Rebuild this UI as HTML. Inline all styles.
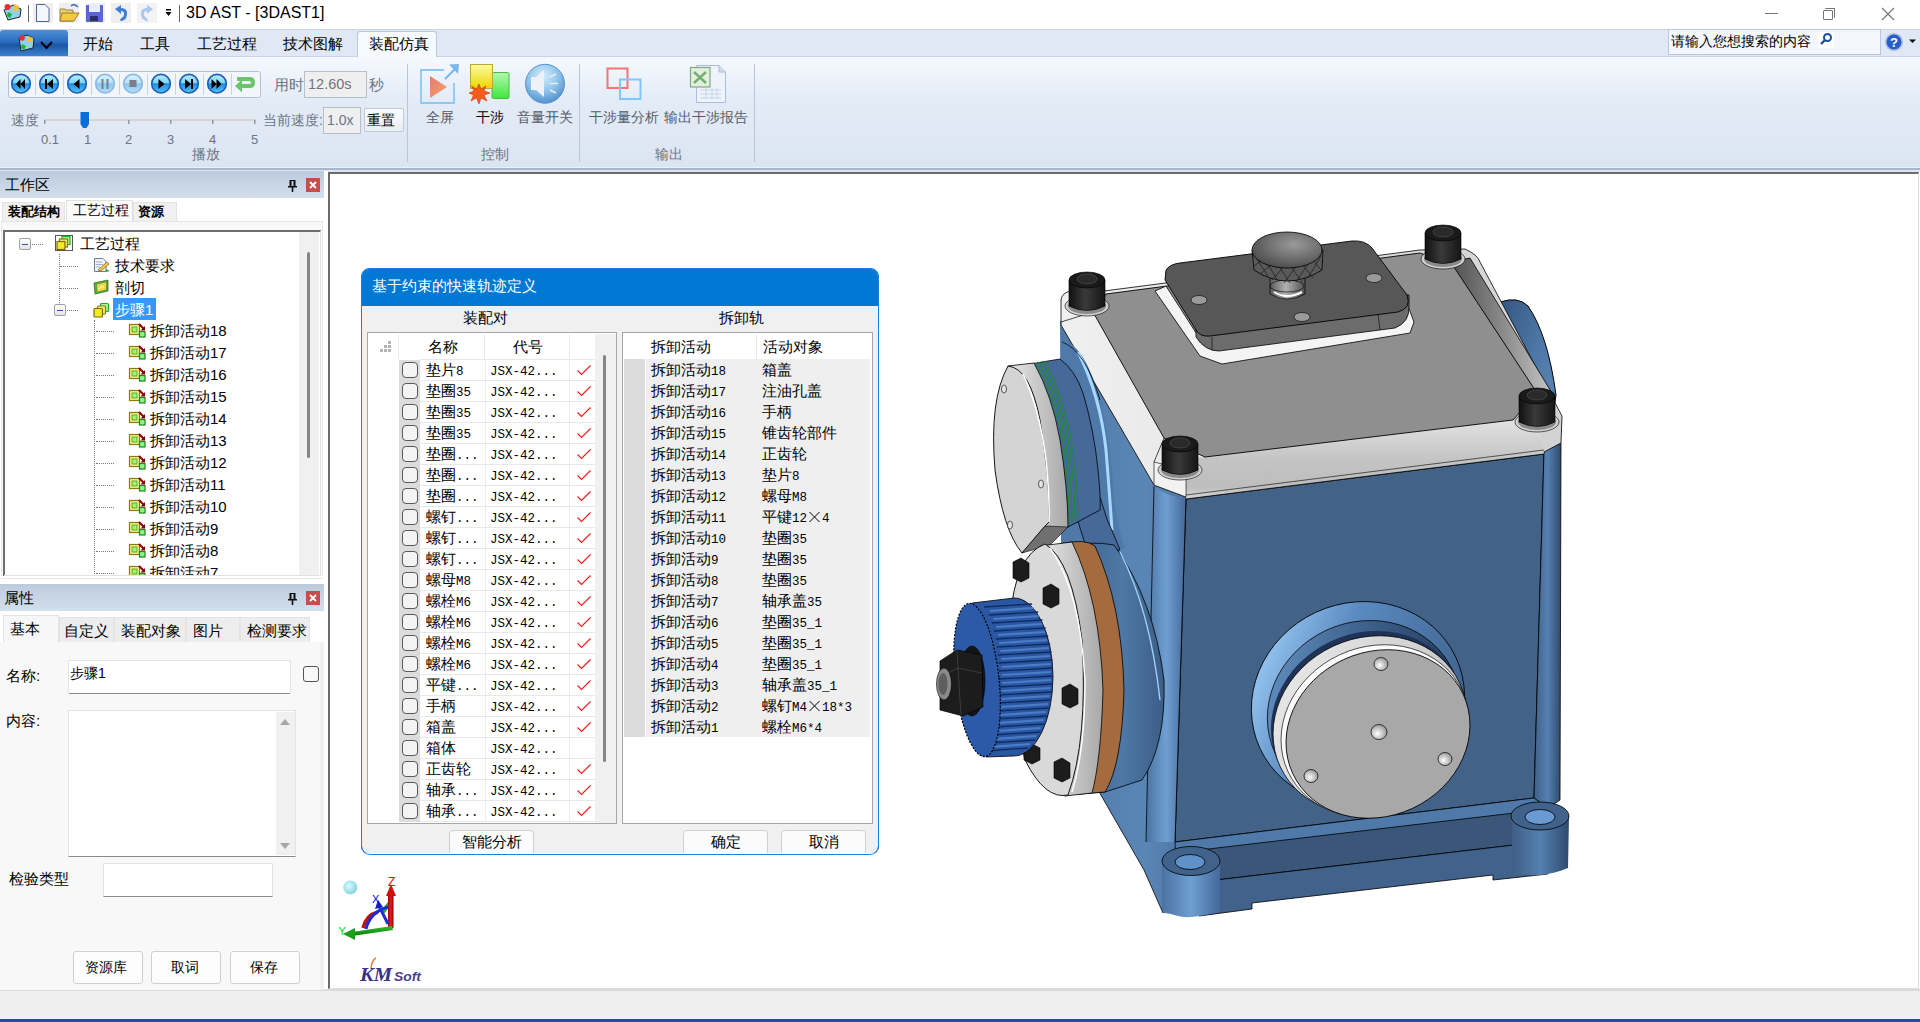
<!DOCTYPE html>
<html><head><meta charset="utf-8">
<style>
*{box-sizing:border-box;margin:0;padding:0}
html,body{width:1920px;height:1022px;overflow:hidden;background:#fff;font-family:"Liberation Sans",sans-serif;font-size:15px;color:#000}
.a{position:absolute}
.t{position:absolute;white-space:nowrap;line-height:1}
</style></head><body>
<!-- title bar -->
<div class="a" style="left:0;top:0;width:1920px;height:29px;background:#fff"></div>
<div class="t" style="left:186px;top:5px;font-size:16px;color:#000">3D AST - [3DAST1]</div>
<!-- tab row -->
<div class="a" style="left:0;top:29px;width:1920px;height:28px;background:#dfe8f4;border-top:1px solid #c9d6e6"></div>
<div class="a" style="left:0;top:30px;width:68px;height:27px;border-radius:3px 3px 0 0;background:linear-gradient(#4f8fd6,#2a6bbf 45%,#1b56a6 55%,#3f86d2)"></div>
<div class="t" style="left:83px;top:36px">开始</div>
<div class="t" style="left:140px;top:36px">工具</div>
<div class="t" style="left:197px;top:36px">工艺过程</div>
<div class="t" style="left:283px;top:36px">技术图解</div>
<div class="a" style="left:357px;top:31px;width:80px;height:27px;background:#f6f9fd;border:1px solid #b9c9dc;border-bottom:none;border-radius:3px 3px 0 0"></div>
<div class="t" style="left:369px;top:36px">装配仿真</div>
<!-- ribbon body -->
<div class="a" style="left:0;top:57px;width:1920px;height:111px;background:linear-gradient(#f5f9fe,#e3ebf6 40%,#dbe5f2)"></div>
<div class="a" style="left:357px;top:56px;width:0;height:0"></div><div class="a" style="left:0;top:56px;width:357px;height:1px;background:#c6d4e6"></div><div class="a" style="left:437px;top:56px;width:1483px;height:1px;background:#c6d4e6"></div>
<div class="a" style="left:0;top:167px;width:1920px;height:1px;background:#e9f0f8"></div>
<div class="a" style="left:0;top:168px;width:1920px;height:2px;background:#a7b8cc"></div>
<div class="a" style="left:0;top:170px;width:1920px;height:2px;background:#dfe6ef"></div>
<!-- left panel bg -->
<div class="a" style="left:0;top:171px;width:328px;height:819px;background:#fff"></div>
<!-- viewport -->
<div class="a" style="left:328px;top:172px;width:1591px;height:817px;background:#fff;border-left:2px solid #6a6a6a;border-top:2px solid #6a6a6a;border-right:1px solid #dcdcdc;border-bottom:1px solid #dcdcdc"></div>
<!-- status bar -->
<div class="a" style="left:0;top:989px;width:1920px;height:31px;background:#efefef;border-top:2px solid #dadada"></div>
<div class="a" style="left:0;top:1019px;width:1920px;height:3px;background:#1f4f9a"></div>


<!-- LEFT PANEL -->
<div class="a" style="left:0;top:171px;width:324px;height:27px;background:linear-gradient(#bccbdc,#d3dfed)"></div>
<div class="t" style="left:5px;top:177px;color:#000">工作区</div>
<svg class="a" style="left:285px;top:178px" width="38" height="16"><path d="M4.5 2 H10.5 V8 H12 V9.5 H8.3 V14 H6.7 V9.5 H3 V8 H4.5 Z" fill="#111"/><rect x="6.5" y="3" width="2" height="5" fill="#bccbdc"/><rect x="21" y="0" width="14" height="14" fill="#c84c4c"/><path d="M25 4 L31 10 M31 4 L25 10" stroke="#fff" stroke-width="1.8"/></svg>
<div class="a" style="left:0;top:198px;width:324px;height:380px;background:#fff"></div>
<div class="a" style="left:2px;top:202px;width:63px;height:19px;background:#f0f0f0;border:1px solid #e3e3e3;border-bottom:none"></div>
<div class="a" style="left:66px;top:200px;width:67px;height:21px;background:#fafafa;border:1px solid #e0e0e0;border-bottom:none"></div>
<div class="a" style="left:133px;top:202px;width:44px;height:19px;background:#f0f0f0;border:1px solid #e3e3e3;border-bottom:none"></div>
<div class="t" style="left:8px;top:205px;font-size:13px;font-weight:bold">装配结构</div>
<div class="t" style="left:73px;top:203px;font-size:14px">工艺过程</div>
<div class="t" style="left:138px;top:205px;font-size:13px;font-weight:bold">资源</div>
<div class="a" style="left:1px;top:221px;width:322px;height:357px;background:#f8f8f8;border:1px solid #e6e6e6"></div>
<div class="a" style="left:3px;top:230px;width:318px;height:347px;background:#fff;border-top:2px solid #6e6e6e;border-left:2px solid #6e6e6e;border-right:1px solid #e2e2e2;border-bottom:1px solid #e2e2e2"></div>
<div class="a" style="left:299px;top:232px;width:20px;height:344px;background:#f0f0f0"></div>
<div class="a" style="left:307px;top:252px;width:3px;height:206px;background:#858585;border-radius:2px"></div>
<!-- tree -->
<div class="a" style="left:19px;top:238px;width:12px;height:12px;background:linear-gradient(#fff,#e4e4e4);border:1px solid #a0a0a0;border-radius:2px"></div>
<div class="a" style="left:22px;top:243.5px;width:6px;height:1.5px;background:#3a4fa0"></div>
<div class="a" style="left:32px;top:244px;width:11px;height:1px;border-top:1px dotted #777"></div>
<svg class="a" style="left:55px;top:235px" width="18" height="16"><rect x="0.5" y="0.5" width="17" height="15" fill="#fff" stroke="#555" stroke-width="1"/><rect x="7" y="1.5" width="8" height="8" fill="#b0f090" stroke="#20b020" stroke-width="1.2"/><rect x="4.5" y="4" width="8" height="8" fill="#f2ee80" stroke="#8a7a10" stroke-width="1.2"/><rect x="2" y="6.5" width="8" height="8" fill="#f4ea20" stroke="#7a6a10" stroke-width="1.2"/></svg>
<div class="t" style="left:80px;top:236px">工艺过程</div>
<div class="a" style="left:59px;top:254px;width:1px;height:51px;border-left:1px dotted #777"></div>
<div class="a" style="left:60px;top:266px;width:18px;height:1px;border-top:1px dotted #777"></div>
<div class="a" style="left:60px;top:288px;width:18px;height:1px;border-top:1px dotted #777"></div>
<svg class="a" style="left:93px;top:257px" width="18" height="16"><path d="M1.5 1.5 H10 L13 4.5 V14.5 H1.5 Z" fill="#eef2fa" stroke="#6a7a9a" stroke-width="1"/><path d="M3 5 H9 M3 7.5 H10 M3 10 H7" stroke="#8a9ab8" stroke-width="0.8"/><path d="M5 13 L14 5 L16 7 L8 14 Z" fill="#f2c84a" stroke="#806010" stroke-width="0.7"/><path d="M13 12 L17 14 L13 15Z" fill="#30a030"/></svg>
<div class="t" style="left:115px;top:258px">技术要求</div>
<svg class="a" style="left:93px;top:279px" width="18" height="17"><path d="M1 4 L15 1 V12 L2 15 Z" fill="#5ea83a" stroke="#3a7020" stroke-width="0.8"/><path d="M4 5.5 L13 3.5 V10.5 L4.5 12.5 Z" fill="#f4d84a"/><path d="M6 10 Q8 6 11 8" fill="none" stroke="#fff" stroke-width="1"/></svg>
<div class="t" style="left:115px;top:280px">剖切</div>
<div class="a" style="left:54px;top:304px;width:12px;height:12px;background:linear-gradient(#fff,#e4e4e4);border:1px solid #a0a0a0;border-radius:2px"></div>
<div class="a" style="left:57px;top:309.5px;width:6px;height:1.5px;background:#3a4fa0"></div>
<div class="a" style="left:67px;top:310px;width:11px;height:1px;border-top:1px dotted #777"></div>
<svg class="a" style="left:92px;top:302px" width="18" height="16"><rect x="8.5" y="1.5" width="8" height="8" rx="1" fill="#b0f090" stroke="#20b020" stroke-width="1.2"/><rect x="5.5" y="4" width="8" height="8" rx="1" fill="#f2ee80" stroke="#8a7a10" stroke-width="1.2"/><rect x="2" y="6.5" width="8.5" height="8.5" rx="1" fill="#f4ea20" stroke="#7a6a10" stroke-width="1.2"/></svg>
<div class="a" style="left:113px;top:298px;width:43px;height:22px;background:#3399ff"></div>
<div class="t" style="left:115px;top:302px;color:#fff">步骤1</div>
<div class="a" style="left:94px;top:320px;width:1px;height:256px;border-left:1px dotted #777"></div>
<svg class="a" style="left:128px;top:323px" width="18" height="16"><rect x="1.5" y="1.5" width="10" height="10" fill="#f4f08a" stroke="#8a7a10" stroke-width="1.2"/><rect x="4" y="4" width="5" height="5" fill="#a8ee70" stroke="#40a020" stroke-width="0.8"/><rect x="11.5" y="8.5" width="5.5" height="5.5" fill="#8ef08e" stroke="#1a8a1a" stroke-width="1.2"/><path d="M11 1 L16 6" stroke="#8a0010" stroke-width="2"/><path d="M17 3 V7.5 H12.5 Z" fill="#8a0010"/></svg><div class="a" style="left:96px;top:331px;width:18px;height:1px;border-top:1px dotted #777"></div><div class="t" style="left:150px;top:323px">拆卸活动18</div><svg class="a" style="left:128px;top:345px" width="18" height="16"><rect x="1.5" y="1.5" width="10" height="10" fill="#f4f08a" stroke="#8a7a10" stroke-width="1.2"/><rect x="4" y="4" width="5" height="5" fill="#a8ee70" stroke="#40a020" stroke-width="0.8"/><rect x="11.5" y="8.5" width="5.5" height="5.5" fill="#8ef08e" stroke="#1a8a1a" stroke-width="1.2"/><path d="M11 1 L16 6" stroke="#8a0010" stroke-width="2"/><path d="M17 3 V7.5 H12.5 Z" fill="#8a0010"/></svg><div class="a" style="left:96px;top:353px;width:18px;height:1px;border-top:1px dotted #777"></div><div class="t" style="left:150px;top:345px">拆卸活动17</div><svg class="a" style="left:128px;top:367px" width="18" height="16"><rect x="1.5" y="1.5" width="10" height="10" fill="#f4f08a" stroke="#8a7a10" stroke-width="1.2"/><rect x="4" y="4" width="5" height="5" fill="#a8ee70" stroke="#40a020" stroke-width="0.8"/><rect x="11.5" y="8.5" width="5.5" height="5.5" fill="#8ef08e" stroke="#1a8a1a" stroke-width="1.2"/><path d="M11 1 L16 6" stroke="#8a0010" stroke-width="2"/><path d="M17 3 V7.5 H12.5 Z" fill="#8a0010"/></svg><div class="a" style="left:96px;top:375px;width:18px;height:1px;border-top:1px dotted #777"></div><div class="t" style="left:150px;top:367px">拆卸活动16</div><svg class="a" style="left:128px;top:389px" width="18" height="16"><rect x="1.5" y="1.5" width="10" height="10" fill="#f4f08a" stroke="#8a7a10" stroke-width="1.2"/><rect x="4" y="4" width="5" height="5" fill="#a8ee70" stroke="#40a020" stroke-width="0.8"/><rect x="11.5" y="8.5" width="5.5" height="5.5" fill="#8ef08e" stroke="#1a8a1a" stroke-width="1.2"/><path d="M11 1 L16 6" stroke="#8a0010" stroke-width="2"/><path d="M17 3 V7.5 H12.5 Z" fill="#8a0010"/></svg><div class="a" style="left:96px;top:397px;width:18px;height:1px;border-top:1px dotted #777"></div><div class="t" style="left:150px;top:389px">拆卸活动15</div><svg class="a" style="left:128px;top:411px" width="18" height="16"><rect x="1.5" y="1.5" width="10" height="10" fill="#f4f08a" stroke="#8a7a10" stroke-width="1.2"/><rect x="4" y="4" width="5" height="5" fill="#a8ee70" stroke="#40a020" stroke-width="0.8"/><rect x="11.5" y="8.5" width="5.5" height="5.5" fill="#8ef08e" stroke="#1a8a1a" stroke-width="1.2"/><path d="M11 1 L16 6" stroke="#8a0010" stroke-width="2"/><path d="M17 3 V7.5 H12.5 Z" fill="#8a0010"/></svg><div class="a" style="left:96px;top:419px;width:18px;height:1px;border-top:1px dotted #777"></div><div class="t" style="left:150px;top:411px">拆卸活动14</div><svg class="a" style="left:128px;top:433px" width="18" height="16"><rect x="1.5" y="1.5" width="10" height="10" fill="#f4f08a" stroke="#8a7a10" stroke-width="1.2"/><rect x="4" y="4" width="5" height="5" fill="#a8ee70" stroke="#40a020" stroke-width="0.8"/><rect x="11.5" y="8.5" width="5.5" height="5.5" fill="#8ef08e" stroke="#1a8a1a" stroke-width="1.2"/><path d="M11 1 L16 6" stroke="#8a0010" stroke-width="2"/><path d="M17 3 V7.5 H12.5 Z" fill="#8a0010"/></svg><div class="a" style="left:96px;top:441px;width:18px;height:1px;border-top:1px dotted #777"></div><div class="t" style="left:150px;top:433px">拆卸活动13</div><svg class="a" style="left:128px;top:455px" width="18" height="16"><rect x="1.5" y="1.5" width="10" height="10" fill="#f4f08a" stroke="#8a7a10" stroke-width="1.2"/><rect x="4" y="4" width="5" height="5" fill="#a8ee70" stroke="#40a020" stroke-width="0.8"/><rect x="11.5" y="8.5" width="5.5" height="5.5" fill="#8ef08e" stroke="#1a8a1a" stroke-width="1.2"/><path d="M11 1 L16 6" stroke="#8a0010" stroke-width="2"/><path d="M17 3 V7.5 H12.5 Z" fill="#8a0010"/></svg><div class="a" style="left:96px;top:463px;width:18px;height:1px;border-top:1px dotted #777"></div><div class="t" style="left:150px;top:455px">拆卸活动12</div><svg class="a" style="left:128px;top:477px" width="18" height="16"><rect x="1.5" y="1.5" width="10" height="10" fill="#f4f08a" stroke="#8a7a10" stroke-width="1.2"/><rect x="4" y="4" width="5" height="5" fill="#a8ee70" stroke="#40a020" stroke-width="0.8"/><rect x="11.5" y="8.5" width="5.5" height="5.5" fill="#8ef08e" stroke="#1a8a1a" stroke-width="1.2"/><path d="M11 1 L16 6" stroke="#8a0010" stroke-width="2"/><path d="M17 3 V7.5 H12.5 Z" fill="#8a0010"/></svg><div class="a" style="left:96px;top:485px;width:18px;height:1px;border-top:1px dotted #777"></div><div class="t" style="left:150px;top:477px">拆卸活动11</div><svg class="a" style="left:128px;top:499px" width="18" height="16"><rect x="1.5" y="1.5" width="10" height="10" fill="#f4f08a" stroke="#8a7a10" stroke-width="1.2"/><rect x="4" y="4" width="5" height="5" fill="#a8ee70" stroke="#40a020" stroke-width="0.8"/><rect x="11.5" y="8.5" width="5.5" height="5.5" fill="#8ef08e" stroke="#1a8a1a" stroke-width="1.2"/><path d="M11 1 L16 6" stroke="#8a0010" stroke-width="2"/><path d="M17 3 V7.5 H12.5 Z" fill="#8a0010"/></svg><div class="a" style="left:96px;top:507px;width:18px;height:1px;border-top:1px dotted #777"></div><div class="t" style="left:150px;top:499px">拆卸活动10</div><svg class="a" style="left:128px;top:521px" width="18" height="16"><rect x="1.5" y="1.5" width="10" height="10" fill="#f4f08a" stroke="#8a7a10" stroke-width="1.2"/><rect x="4" y="4" width="5" height="5" fill="#a8ee70" stroke="#40a020" stroke-width="0.8"/><rect x="11.5" y="8.5" width="5.5" height="5.5" fill="#8ef08e" stroke="#1a8a1a" stroke-width="1.2"/><path d="M11 1 L16 6" stroke="#8a0010" stroke-width="2"/><path d="M17 3 V7.5 H12.5 Z" fill="#8a0010"/></svg><div class="a" style="left:96px;top:529px;width:18px;height:1px;border-top:1px dotted #777"></div><div class="t" style="left:150px;top:521px">拆卸活动9</div><svg class="a" style="left:128px;top:543px" width="18" height="16"><rect x="1.5" y="1.5" width="10" height="10" fill="#f4f08a" stroke="#8a7a10" stroke-width="1.2"/><rect x="4" y="4" width="5" height="5" fill="#a8ee70" stroke="#40a020" stroke-width="0.8"/><rect x="11.5" y="8.5" width="5.5" height="5.5" fill="#8ef08e" stroke="#1a8a1a" stroke-width="1.2"/><path d="M11 1 L16 6" stroke="#8a0010" stroke-width="2"/><path d="M17 3 V7.5 H12.5 Z" fill="#8a0010"/></svg><div class="a" style="left:96px;top:551px;width:18px;height:1px;border-top:1px dotted #777"></div><div class="t" style="left:150px;top:543px">拆卸活动8</div><svg class="a" style="left:128px;top:565px" width="18" height="16"><rect x="1.5" y="1.5" width="10" height="10" fill="#f4f08a" stroke="#8a7a10" stroke-width="1.2"/><rect x="4" y="4" width="5" height="5" fill="#a8ee70" stroke="#40a020" stroke-width="0.8"/><rect x="11.5" y="8.5" width="5.5" height="5.5" fill="#8ef08e" stroke="#1a8a1a" stroke-width="1.2"/><path d="M11 1 L16 6" stroke="#8a0010" stroke-width="2"/><path d="M17 3 V7.5 H12.5 Z" fill="#8a0010"/></svg><div class="a" style="left:96px;top:573px;width:18px;height:1px;border-top:1px dotted #777"></div><div class="t" style="left:150px;top:565px">拆卸活动7</div>
<div class="a" style="left:0;top:576px;width:324px;height:8px;background:#fff"></div><div class="a" style="left:4px;top:575px;width:317px;height:1px;background:#e2e2e2"></div><div class="a" style="left:1px;top:578px;width:322px;height:1px;background:#e8e8e8"></div>
<!-- PROPERTIES -->
<div class="a" style="left:0;top:584px;width:324px;height:27px;background:linear-gradient(#bccbdc,#d3dfed)"></div>
<div class="t" style="left:4px;top:590px">属性</div>
<svg class="a" style="left:285px;top:591px" width="38" height="16"><path d="M4.5 2 H10.5 V8 H12 V9.5 H8.3 V14 H6.7 V9.5 H3 V8 H4.5 Z" fill="#111"/><rect x="6.5" y="3" width="2" height="5" fill="#bccbdc"/><rect x="21" y="0" width="14" height="14" fill="#c84c4c"/><path d="M25 4 L31 10 M31 4 L25 10" stroke="#fff" stroke-width="1.8"/></svg>
<div class="a" style="left:0;top:611px;width:324px;height:379px;background:#fff"></div><div class="a" style="left:320px;top:642px;width:4px;height:348px;background:#f0f0f0"></div>
<div class="a" style="left:0;top:642px;width:320px;height:348px;background:#f8f8f8"></div>
<div class="a" style="left:3px;top:615px;width:56px;height:28px;background:#f7f7f7;border:1px solid #e3e3e3;border-bottom:none"></div>
<div class="a" style="left:59px;top:617px;width:55px;height:25px;background:#ededed;border:1px solid #e3e3e3;border-bottom:none"></div>
<div class="a" style="left:114px;top:617px;width:72px;height:25px;background:#ededed;border:1px solid #e3e3e3;border-bottom:none"></div>
<div class="a" style="left:186px;top:617px;width:54px;height:25px;background:#ededed;border:1px solid #e3e3e3;border-bottom:none"></div>
<div class="a" style="left:240px;top:617px;width:70px;height:25px;background:#ededed;border:1px solid #e3e3e3;border-bottom:none"></div>
<div class="t" style="left:10px;top:621px">基本</div>
<div class="t" style="left:64px;top:623px">自定义</div>
<div class="t" style="left:121px;top:623px">装配对象</div>
<div class="t" style="left:193px;top:623px">图片</div>
<div class="t" style="left:247px;top:623px">检测要求</div>
<div class="t" style="left:6px;top:668px">名称:</div>
<div class="a" style="left:68px;top:660px;width:223px;height:34px;background:#fff;border:1px solid #e3e3e3;border-bottom:1px solid #8a8a8a;border-radius:2px"></div>
<div class="t" style="left:70px;top:666px;font-size:14px">步骤1</div>
<div class="a" style="left:303px;top:666px;width:16px;height:16px;background:#f8f8f8;border:1px solid #555;border-radius:3px"></div>
<div class="t" style="left:6px;top:713px">内容:</div>
<div class="a" style="left:68px;top:710px;width:228px;height:147px;background:#fff;border:1px solid #e3e3e3;border-bottom:1px solid #8a8a8a"></div>
<div class="a" style="left:276px;top:712px;width:19px;height:143px;background:#f0f0f0"></div>
<svg class="a" style="left:278px;top:715px" width="14" height="138"><path d="M2 10 L7 4 L12 10Z" fill="#a8a8a8"/><path d="M2 128 L7 134 L12 128Z" fill="#a8a8a8"/></svg>
<div class="t" style="left:9px;top:871px">检验类型</div>
<div class="a" style="left:103px;top:863px;width:170px;height:34px;background:#fff;border:1px solid #e3e3e3;border-bottom:1px solid #8a8a8a"></div>
<div class="a" style="left:73px;top:951px;width:70px;height:33px;background:#fdfdfd;border:1px solid #cfcfcf;border-radius:3px"></div>
<div class="a" style="left:151px;top:951px;width:70px;height:33px;background:#fdfdfd;border:1px solid #cfcfcf;border-radius:3px"></div>
<div class="a" style="left:230px;top:951px;width:70px;height:33px;background:#fdfdfd;border:1px solid #cfcfcf;border-radius:3px"></div>
<div class="t" style="left:85px;top:960px;font-size:14px">资源库</div>
<div class="t" style="left:171px;top:960px;font-size:14px">取词</div>
<div class="t" style="left:250px;top:960px;font-size:14px">保存</div>


<!-- TRIAD -->
<svg class="a" style="left:335px;top:868px" width="90" height="120" viewBox="335 868 90 120">
<defs><radialGradient id="tsph" cx="0.4" cy="0.4" r="0.6"><stop offset="0" stop-color="#d8fbfd"/><stop offset="1" stop-color="#86d6e0"/></radialGradient>
<linearGradient id="tred" x1="0" y1="0" x2="1" y2="0"><stop offset="0" stop-color="#a00000"/><stop offset="0.5" stop-color="#e02020"/><stop offset="1" stop-color="#900000"/></linearGradient>
<linearGradient id="tgrn" x1="0" y1="0" x2="0" y2="1"><stop offset="0" stop-color="#30c030"/><stop offset="1" stop-color="#0a7a0a"/></linearGradient></defs>
<circle cx="350.3" cy="887.4" r="7" fill="url(#tsph)"/>
<path d="M363 928 Q366 915 378 912" fill="none" stroke="#c01010" stroke-width="3.5"/>
<path d="M383 912 Q388 905 390 903" fill="none" stroke="#20b020" stroke-width="4"/>
<rect x="388" y="893" width="5.5" height="35" fill="url(#tred)"/>
<path d="M386 896 L391 884 L396 896 Z" fill="#d01010"/>
<path d="M392 926 L352 932 L352 936 L393 930 Z" fill="url(#tgrn)"/>
<path d="M343 934 L355 928 L355 940 Z" fill="#18a018"/>
<path d="M366 929 Q370 912 388 907" fill="none" stroke="#1a2ad8" stroke-width="3"/>
<path d="M388 924 L379 906" stroke="#2030d0" stroke-width="3"/>
<path d="M375 909 L378 900 L383 907 Z" fill="#1020c0"/>
<text x="388" y="886" font-size="12" fill="#f00" font-family="Liberation Sans">Z</text>
<text x="372" y="903" font-size="11" fill="#00f" font-family="Liberation Sans">X</text>
<text x="338.5" y="935" font-size="11" fill="#0d0" font-family="Liberation Sans">Y</text>
<path d="M371 968 Q372 960 376 958" fill="none" stroke="#e08040" stroke-width="1.5"/>
<text x="360" y="981" font-size="19" font-weight="bold" font-style="italic" fill="#3b2f85" font-family="Liberation Serif" textLength="32" lengthAdjust="spacingAndGlyphs">KM</text>
<text x="394" y="981" font-size="12" font-weight="bold" font-style="italic" fill="#4a3f95" font-family="Liberation Sans" textLength="27" lengthAdjust="spacingAndGlyphs">Soft</text>
</svg>
<!-- MODEL --><svg class="a" style="left:900px;top:200px" width="700" height="740" viewBox="900 200 700 740">
<defs>
<linearGradient id="mside" x1="0" y1="0" x2="1" y2="0"><stop offset="0" stop-color="#4f79a8"/><stop offset="0.6" stop-color="#5a86b6"/><stop offset="1" stop-color="#4a729f"/></linearGradient>
<linearGradient id="mfil" x1="0" y1="0" x2="1" y2="0"><stop offset="0" stop-color="#4a72a0"/><stop offset="0.5" stop-color="#6f9fd2"/><stop offset="1" stop-color="#45699a"/></linearGradient>
<linearGradient id="mrfil" x1="0" y1="0" x2="1" y2="0"><stop offset="0" stop-color="#3f5f86"/><stop offset="0.5" stop-color="#5480b0"/><stop offset="1" stop-color="#2e4a6e"/></linearGradient>
<linearGradient id="mrboss" x1="0" y1="0" x2="1" y2="1"><stop offset="0" stop-color="#2f4f78"/><stop offset="0.5" stop-color="#4d77a6"/><stop offset="1" stop-color="#5f8dc0"/></linearGradient>
<linearGradient id="mrim" x1="0" y1="0" x2="1" y2="0"><stop offset="0" stop-color="#f0f0f0"/><stop offset="1" stop-color="#d2d2d2"/></linearGradient>
<linearGradient id="mrbev" x1="0" y1="0" x2="1" y2="0"><stop offset="0" stop-color="#505050"/><stop offset="0.5" stop-color="#8a8a8a"/><stop offset="1" stop-color="#c8c8c8"/></linearGradient>
<linearGradient id="mfront" x1="0" y1="0" x2="0" y2="1"><stop offset="0" stop-color="#e2e2e2"/><stop offset="0.5" stop-color="#c4c4c4"/><stop offset="0.85" stop-color="#bdbdbd"/><stop offset="1" stop-color="#d8d8d8"/></linearGradient>
<radialGradient id="mknob" cx="0.6" cy="0.35" r="0.7"><stop offset="0" stop-color="#9a9a9a"/><stop offset="1" stop-color="#4a4a4a"/></radialGradient>
<linearGradient id="mbolt" x1="0" y1="0" x2="1" y2="0"><stop offset="0" stop-color="#111"/><stop offset="0.45" stop-color="#3a3a3a"/><stop offset="1" stop-color="#151515"/></linearGradient>
<linearGradient id="mdisc" x1="0" y1="0" x2="1" y2="1"><stop offset="0" stop-color="#d8d8d8"/><stop offset="1" stop-color="#bdbdbd"/></linearGradient>
<linearGradient id="mband" x1="0" y1="0" x2="1" y2="0"><stop offset="0" stop-color="#e8e8e8"/><stop offset="1" stop-color="#a8a8a8"/></linearGradient>
<linearGradient id="mgear" x1="0" y1="0" x2="1" y2="0"><stop offset="0" stop-color="#1f3f7c"/><stop offset="0.5" stop-color="#3566b4"/><stop offset="1" stop-color="#244a8c"/></linearGradient>
<linearGradient id="mhous" x1="0" y1="0" x2="1" y2="0"><stop offset="0" stop-color="#3d5f88"/><stop offset="0.6" stop-color="#4e78a6"/><stop offset="1" stop-color="#3c5d86"/></linearGradient>
<linearGradient id="mcap" x1="0" y1="0" x2="1" y2="1"><stop offset="0" stop-color="#b4b4b4"/><stop offset="1" stop-color="#a2a2a2"/></linearGradient>
<linearGradient id="mrecess" x1="0" y1="0.2" x2="0.8" y2="1"><stop offset="0" stop-color="#9ccbf5"/><stop offset="0.35" stop-color="#5a8ac0"/><stop offset="1" stop-color="#3a5c86"/></linearGradient>
<linearGradient id="mrec2" x1="0" y1="0" x2="1" y2="0.6"><stop offset="0" stop-color="#6b9bd0"/><stop offset="0.5" stop-color="#40658f"/><stop offset="1" stop-color="#22385a"/></linearGradient>
<linearGradient id="mcband" x1="0" y1="0" x2="1" y2="1"><stop offset="0" stop-color="#ececec"/><stop offset="0.6" stop-color="#cfcfcf"/><stop offset="1" stop-color="#9a9a9a"/></linearGradient>
<radialGradient id="mhole" cx="0.4" cy="0.6" r="0.6"><stop offset="0" stop-color="#ffffff"/><stop offset="1" stop-color="#9a9a9a"/></radialGradient>
<linearGradient id="mstem" x1="0" y1="0" x2="1" y2="0"><stop offset="0" stop-color="#5a5a5a"/><stop offset="0.45" stop-color="#b0b0b0"/><stop offset="1" stop-color="#505050"/></linearGradient>
</defs>
<g stroke="#000" stroke-width="1" stroke-linejoin="round">
<!-- right boss behind -->
<path d="M1488 306 L1500 302 Q1518 296 1528 306 Q1548 335 1556 395 L1545 470 L1488 470 Z" fill="url(#mrboss)"/>
<!-- left side face of box -->
<path d="M1060 320 L1154 484 L1186 497 L1176 860 L1199 916 L1163 913 L1144 870 L1098 790 L1062 760 Z" fill="url(#mside)" stroke="none"/>
<path d="M1098 790 L1144 870 L1163 913" fill="none" stroke-width="0.8"/>
<!-- front face -->
<path d="M1186 499 L1544 454 L1534 798 L1175 842 Z" fill="#426287"/>
<!-- front-left fillet -->
<path d="M1154 486 Q1170 499 1186 497 L1175 842 L1146 842 Z" fill="url(#mfil)" stroke="none"/>
<path d="M1154 486 L1146 842" fill="none" stroke-width="0.8"/>
<path d="M1186 497 L1175 842" fill="none" stroke-width="0.8"/>
<!-- right fillet -->
<path d="M1544 451 L1561 443 L1560 800 L1548 808 L1534 798 Z" fill="url(#mrfil)" stroke-width="0.8"/>
<!-- base -->
<path d="M1175 842 L1534 798 L1548 808 L1548 842 L1199 883 L1176 870 Z" fill="#4f79a8" stroke-width="0.8"/>
<path d="M1200 850 L1548 809 L1548 841 L1199 882 Z" fill="#3a5678" stroke-width="0.8"/>
<path d="M1199 882 L1548 841 L1548 874 L1493 880 L1493 875 L1252 903 L1252 909 L1199 916 Z" fill="#41628a" stroke-width="0.8"/>

<path d="M1162 861 L1162 910 Q1180 920 1199 916 L1220 912 L1220 861 Z" fill="url(#mfil)" stroke="none"/>
<ellipse cx="1191" cy="861" rx="29" ry="14.5" fill="#41628a" stroke-width="0.8"/>
<ellipse cx="1190" cy="862" rx="15" ry="7.5" fill="#5f92c8" stroke-width="0.8"/>
<path d="M1512 816 L1512 872 Q1540 880 1568 868 L1569 816 Z" fill="url(#mrfil)" stroke="none"/>
<ellipse cx="1540" cy="816" rx="29" ry="14" fill="#41628a" stroke-width="0.8"/>
<ellipse cx="1540" cy="817" rx="15" ry="7.5" fill="#6a9ad2" stroke-width="0.8"/>
<!-- lid rim -->
<path d="M1061 300 Q1062 292 1072 291 L1104 291 L1420 250 L1465 249 Q1478 255 1480 262 L1562 416 L1561 443 L1544 452 L1186 497 L1154 485 L1061 325 Z" fill="url(#mrim)" stroke-width="0.8"/>
<path d="M1186 458 L1205 457 L1513 420 L1540 420 L1544 454 L1186 499 Z" fill="url(#mfront)" stroke="none"/>
<path d="M1186 495 L1544 450" fill="none" stroke-width="0.6"/>
<path d="M1186 499 L1544 454" fill="none" stroke-width="0.8"/>
<path d="M1154 462 L1186 470 L1186 497 L1154 485 Z" fill="#f2f2f2" stroke-width="0.6"/>
<!-- right bevel -->
<path d="M1450 262 L1470 258 L1555 398 L1537 394 Z" fill="url(#mrbev)" stroke-width="0.8"/>
<!-- grey top -->
<path d="M1093 312 L1106 294 L1420 253 L1452 264 L1537 393 L1513 420 L1205 457 L1164 438 Z" fill="#8f8f8f" stroke-width="0.9"/>
<path d="M1061 322 L1093 312 M1154 462 L1164 438" fill="none" stroke-width="0.7"/>
<!-- inspection recess rim -->
<path d="M1155 291 L1166 286 L1198 336 L1212 342 L1398 317 L1408 306 L1414 322 L1410 333 L1222 364 L1200 356 Z" fill="#f4f4f4" stroke-width="0.8"/>
<!-- inspection cover -->
<path d="M1166 272 L1196 322 L1196 337 Q1205 351 1219 351 L1395 328 Q1410 322 1409 306 L1409 295 Z" fill="#6c6c6c" stroke-width="0.8"/>
<path d="M1166 270 Q1170 264 1180 263 L1352 241 Q1365 240 1372 248 L1407 295 Q1412 308 1398 312 L1210 336 Q1200 337 1196 330 L1165 280 Z" fill="#575757" stroke-width="0.9"/>
<path d="M1212 337 L1212 350 M1378 314 L1380 330" fill="none" stroke-width="0.6"/>
<ellipse cx="1199" cy="300" rx="8" ry="4.5" fill="#9a9a9a" stroke-width="0.6"/>
<ellipse cx="1374" cy="278" rx="8" ry="4.5" fill="#9a9a9a" stroke-width="0.6"/>
<ellipse cx="1302" cy="317" rx="8" ry="4.5" fill="#9a9a9a" stroke-width="0.6"/>
<!-- knob -->
<path d="M1270 275 L1270 294 Q1287 304 1305 294 L1305 275 Z" fill="url(#mstem)" stroke-width="0.7"/>
<path d="M1274 292 Q1287 300 1302 292" fill="none" stroke="#fff" stroke-width="2"/>
<ellipse cx="1287" cy="286" rx="17" ry="6" fill="none" stroke-width="0.6"/>
<path d="M1252 250 L1254 270 Q1287 292 1322 270 L1323 250 Z" fill="#5a5a5a" stroke-width="0.8"/>
<path d="M1255 256 L1268 276 M1264 258 L1278 281 M1275 260 L1290 283 M1287 261 L1302 282 M1299 260 L1313 278 M1311 257 L1321 270 M1321 256 L1308 278 M1312 258 L1296 282 M1301 260 L1284 283 M1289 261 L1272 280 M1277 260 L1260 274 M1265 258 L1254 266" fill="none" stroke="#222" stroke-width="0.8"/>
<ellipse cx="1287" cy="250" rx="35" ry="18" fill="url(#mknob)" stroke-width="0.8"/>
<!-- bolts -->
<g id="bolt">
<ellipse cx="1087" cy="306" rx="22" ry="10" fill="#d0d0d0" stroke-width="0.6"/>
<ellipse cx="1087" cy="306" rx="19" ry="8" fill="#8a8a8a" stroke="none"/>
<path d="M1069 280 L1069 306 Q1087 315 1105 306 L1105 280 Z" fill="url(#mbolt)" stroke-width="0.6"/>
<ellipse cx="1087" cy="280" rx="18" ry="8" fill="#1a1a1a" stroke-width="0.6"/>
<ellipse cx="1087" cy="279" rx="10" ry="5" fill="#2a2a2a" stroke="#555" stroke-width="0.6"/>
</g>
<use href="#bolt" x="356" y="-47"/>
<use href="#bolt" x="450" y="116"/>
<use href="#bolt" x="93" y="164"/>
<!-- upper left housing -->
<path d="M1062 340 Q1085 345 1100 400 Q1112 450 1114 500 Q1118 530 1125 548 L1062 560 Z" fill="#4f79a8" stroke="none"/>
<path d="M1078 352 Q1100 395 1106 450 Q1110 500 1112 530" fill="none" stroke="#a8d8ff" stroke-width="3"/>
<path d="M1062 342 Q1085 350 1100 400" fill="none" stroke-width="0.7"/>
<!-- neck block -->
<path d="M1072 500 L1100 497 Q1106 520 1116 540 L1120 550 L1088 552 Q1080 530 1072 500 Z" fill="#46699a" stroke-width="0.8"/>
<!-- upper cap: blue ring -->
<path d="M1030 364 L1060 359 Q1075 370 1083 393 Q1094 430 1098 470 Q1101 500 1100 510 L1068 527 Z" fill="#46699a" stroke-width="0.8"/>
<path d="M1036 363 Q1056 400 1064 450 Q1069 490 1069 524 M1039 362 Q1059 400 1067 450 Q1072 490 1072 522 M1042 361 Q1062 400 1070 450 Q1075 490 1075 520 M1045 361 Q1065 400 1073 450 Q1078 490 1078 518" fill="none" stroke="#1f8a35" stroke-width="1.1"/>
<!-- grey rim band -->
<path d="M1008 366 L1034 363 Q1052 395 1060 440 Q1068 490 1068 527 L1045 540 L1022 553 Z" fill="url(#mband)" stroke-width="0.8"/>
<!-- disc face -->
<path d="M1008 366 Q1030 368 1040 420 Q1050 480 1049 522 L1045 526 L1022 553 Q1003 530 995 470 Q989 400 1008 366 Z" fill="#d4d4d4" stroke-width="0.9"/>
<path d="M1023 374 Q1040 410 1046 460 Q1050 500 1049 522" fill="none" stroke="#fff" stroke-width="1.6"/>
<path d="M1022 553 L1045 526 L1068 527 L1050 545 Z" fill="#707070" stroke-width="0.6"/>
<ellipse cx="1004" cy="389" rx="2.5" ry="4" fill="#e6e6e6" stroke-width="0.6"/>
<ellipse cx="1041" cy="484" rx="2.5" ry="4" fill="#e6e6e6" stroke-width="0.6"/>
<ellipse cx="1010" cy="525" rx="2.5" ry="4" fill="#e6e6e6" stroke-width="0.6"/>
<!-- lower housing -->
<path d="M1060 548 Q1090 540 1114 545 Q1154 600 1164 680 Q1166 745 1142 780 L1105 792 L1065 795 Z" fill="url(#mhous)" stroke-width="0.8"/>
<path d="M1120 552 Q1150 610 1160 700" fill="none" stroke="#9fd0f5" stroke-width="1.4"/>
<!-- brown gasket -->
<path d="M1060 544 Q1085 538 1095 546 Q1122 605 1124 690 Q1122 765 1105 792 L1080 794 Z" fill="#a46c3e" stroke-width="0.8"/>
<!-- flange band -->
<path d="M1040 546 L1072 542 Q1100 600 1103 690 Q1101 760 1092 793 L1065 796 L1050 790 Z" fill="url(#mband)" stroke-width="0.8"/>
<!-- flange face -->
<path d="M1045 544 Q1072 560 1082 640 Q1088 740 1068 795 Q1045 800 1025 760 Q1008 700 1010 620 Q1015 555 1045 544 Z" fill="#d9d9d9" stroke-width="0.9"/>
<path d="M1050 548 Q1080 590 1085 680 Q1085 750 1072 792" fill="none" stroke="#fff" stroke-width="1.4"/>
<!-- flange bolts -->
<g fill="#1c1c1c" stroke="#000" stroke-width="0.6">
<path d="M1013 562 L1021 558 L1029 563 L1029 578 L1021 582 L1013 578 Z"/>
<path d="M1043 588 L1051 584 L1059 589 L1059 604 L1051 608 L1043 604 Z"/>
<path d="M1062 688 L1070 684 L1078 689 L1078 704 L1070 708 L1062 704 Z"/>
<path d="M1054 762 L1062 758 L1070 763 L1070 778 L1062 782 L1054 778 Z"/>
<path d="M1024 747 L1032 744 L1040 748 L1040 760 L1032 764 L1024 760 Z"/>
</g>
<!-- gear -->
<path d="M972 603 L1014 598 A39 79 0 0 1 1014 756 L986 757 Z" fill="#2b56a2" stroke-width="0.8"/>
<path d="M989.8 611 L1033.4 608 M993.4 619 L1038.5 616 M996.0 627 L1042.2 624 M997.9 635 L1045.0 632 M999.3 643 L1047.2 640 M1000.4 651 L1048.8 648 M1001.2 659 L1050.0 656 M1001.7 667 L1050.7 664 M1002.0 675 L1051.0 672 M1002.0 683 L1050.9 680 M1001.8 691 L1050.4 688 M1001.3 699 L1049.5 696 M1000.6 707 L1048.1 704 M999.6 715 L1046.2 712 M998.2 723 L1043.7 720 M996.5 731 L1040.5 728 M994.1 739 L1036.2 736 M990.8 747 L1030.1 744" fill="none" stroke="#4a7cc8" stroke-width="2.2"/>
<path d="M984.0 607 L1032.1 604 M988.8 615 L1038.2 612 M991.8 623 L1042.5 620 M994.0 631 L1045.7 628 M995.6 639 L1048.2 636 M996.9 647 L1050.1 644 M997.8 655 L1051.5 652 M998.5 663 L1052.4 660 M998.8 671 L1052.9 668 M999.0 679 L1053.0 676 M998.9 687 L1052.7 684 M998.6 695 L1052.0 692 M998.0 703 L1050.8 700 M997.1 711 L1049.2 708 M996.0 719 L1047.0 716 M994.4 727 L1044.2 724 M992.4 735 L1040.5 732 M989.6 743 L1035.4 740 M985.5 751 L1027.7 748" fill="none" stroke="#102a60" stroke-width="1.3"/>
<ellipse cx="977" cy="680" rx="22" ry="77" transform="rotate(-6 977 680)" fill="#2d5aa8" stroke="#000" stroke-width="1.2" stroke-dasharray="2 1.5"/>
<ellipse cx="972" cy="681" rx="13" ry="35" fill="#151515" stroke-width="0.6"/>
<ellipse cx="970" cy="681" rx="9" ry="30" fill="#2a2a2a" stroke-width="0.5"/>
<!-- nut -->
<path d="M940 661 L957 650 L982 655 L983 707 L963 716 L940 710 Z" fill="#1c1c1c" stroke-width="0.7"/>
<path d="M957 650 L958 668 L982 673 M958 668 L940 677 M958 668 L961 716" fill="none" stroke="#474747" stroke-width="0.7"/>
<ellipse cx="944" cy="684" rx="7.5" ry="16" fill="#8a8a8a" stroke-width="0.6"/>
<ellipse cx="943" cy="684" rx="4.5" ry="11" fill="#5e5e5e" stroke="none"/>
<!-- front recess -->
<ellipse cx="1358" cy="703" rx="108" ry="100" transform="rotate(-25 1358 703)" fill="url(#mrecess)" stroke-width="0.8"/>
<ellipse cx="1364" cy="712" rx="98" ry="90" transform="rotate(-25 1364 712)" fill="url(#mrec2)" stroke-width="0.7"/>
<ellipse cx="1368" cy="721" rx="99" ry="88" transform="rotate(-25 1368 721)" fill="#1f3358" stroke="none"/>
<ellipse cx="1370" cy="725" rx="99" ry="87" transform="rotate(-25 1370 725)" fill="url(#mcband)" stroke-width="0.7"/>
<ellipse cx="1375" cy="731" rx="96" ry="84" transform="rotate(-25 1375 731)" fill="#fafafa" stroke-width="0.6"/>
<ellipse cx="1378" cy="734" rx="94" ry="82" transform="rotate(-25 1378 734)" fill="#a8a8a8" stroke-width="0.8"/>
<g stroke-width="0.7">
<ellipse cx="1381" cy="664" rx="7" ry="6.5" fill="url(#mhole)"/>
<ellipse cx="1379" cy="732" rx="8" ry="7.5" fill="url(#mhole)"/>
<ellipse cx="1445" cy="759" rx="7" ry="6.5" fill="url(#mhole)"/>
<ellipse cx="1311" cy="776" rx="7" ry="6.5" fill="url(#mhole)"/>
</g>
</g>
</svg>
<!-- /MODEL -->
<!-- DIALOG -->
<style>.d{font-size:15px;line-height:15px}.m{font-family:"Liberation Mono",monospace;font-size:12.5px}</style>
<div class="a" style="left:361px;top:268px;width:518px;height:587px;background:#f0f0f0;border:1.5px solid #1a7fe0;border-radius:8px 8px 9px 9px;overflow:hidden">
 <div class="a" style="left:0;top:0;width:518px;height:37px;background:#0078d4"></div>
</div>
<div class="t" style="left:372px;top:278px;color:#fff;font-size:15px">基于约束的快速轨迹定义</div>
<div class="t d" style="left:463px;top:310px">装配对</div>
<div class="t d" style="left:719px;top:310px">拆卸轨</div>
<!-- left grid -->
<div class="a" style="left:367px;top:332px;width:250px;height:492px;background:#fff;border:1px solid #a5a5aa"></div>
<div class="a" style="left:398px;top:334px;width:1px;height:25px;background:#e8e8e8"></div>
<div class="a" style="left:484px;top:334px;width:1px;height:25px;background:#e8e8e8"></div>
<div class="a" style="left:569px;top:334px;width:1px;height:25px;background:#e8e8e8"></div>
<div class="a" style="left:420px;top:359px;width:175px;height:1px;background:#e8e8e8"></div>
<div class="a" style="left:399px;top:360px;width:21px;height:462px;background:#dcdcdc"></div>
<div class="a" style="left:485px;top:360px;width:1px;height:462px;background:#ececec"></div>
<div class="a" style="left:569px;top:360px;width:1px;height:462px;background:#ececec"></div>
<div class="a" style="left:595px;top:334px;width:21px;height:489px;background:#f0f0f0"></div>
<div class="a" style="left:603px;top:355px;width:3px;height:407px;background:#858585;border-radius:2px"></div>
<svg class="a" style="left:380px;top:340px" width="14" height="14"><g fill="#b4b4b4"><rect x="8" y="1" width="3" height="3"/><rect x="4" y="5" width="3" height="3"/><rect x="8" y="5" width="3" height="3"/><rect x="0" y="9" width="3" height="3"/><rect x="4" y="9" width="3" height="3"/><rect x="8" y="9" width="3" height="3"/></g></svg>
<div class="t d" style="left:428px;top:339px">名称</div>
<div class="t d" style="left:513px;top:339px">代号</div>
<div class="a" style="left:420px;top:380px;width:175px;height:1px;background:#e8e8e8"></div><div class="a" style="left:402px;top:362px;width:16px;height:16px;background:#f3f3f3;border:1.3px solid #5a5a5a;border-radius:4px"></div><div class="t d" style="left:426px;top:362px">垫片<span class="m">8</span></div><div class="t d" style="left:490px;top:362px"><span class="m">JSX-42...</span></div><svg class="a" style="left:576px;top:363px" width="16" height="14"><path d="M1.5 7.5 L5.5 11.5 L14.5 2.5" fill="none" stroke="#f01818" stroke-width="1.1"/></svg><div class="a" style="left:420px;top:401px;width:175px;height:1px;background:#e8e8e8"></div><div class="a" style="left:402px;top:383px;width:16px;height:16px;background:#f3f3f3;border:1.3px solid #5a5a5a;border-radius:4px"></div><div class="t d" style="left:426px;top:383px">垫圈<span class="m">35</span></div><div class="t d" style="left:490px;top:383px"><span class="m">JSX-42...</span></div><svg class="a" style="left:576px;top:384px" width="16" height="14"><path d="M1.5 7.5 L5.5 11.5 L14.5 2.5" fill="none" stroke="#f01818" stroke-width="1.1"/></svg><div class="a" style="left:420px;top:422px;width:175px;height:1px;background:#e8e8e8"></div><div class="a" style="left:402px;top:404px;width:16px;height:16px;background:#f3f3f3;border:1.3px solid #5a5a5a;border-radius:4px"></div><div class="t d" style="left:426px;top:404px">垫圈<span class="m">35</span></div><div class="t d" style="left:490px;top:404px"><span class="m">JSX-42...</span></div><svg class="a" style="left:576px;top:405px" width="16" height="14"><path d="M1.5 7.5 L5.5 11.5 L14.5 2.5" fill="none" stroke="#f01818" stroke-width="1.1"/></svg><div class="a" style="left:420px;top:443px;width:175px;height:1px;background:#e8e8e8"></div><div class="a" style="left:402px;top:425px;width:16px;height:16px;background:#f3f3f3;border:1.3px solid #5a5a5a;border-radius:4px"></div><div class="t d" style="left:426px;top:425px">垫圈<span class="m">35</span></div><div class="t d" style="left:490px;top:425px"><span class="m">JSX-42...</span></div><svg class="a" style="left:576px;top:426px" width="16" height="14"><path d="M1.5 7.5 L5.5 11.5 L14.5 2.5" fill="none" stroke="#f01818" stroke-width="1.1"/></svg><div class="a" style="left:420px;top:464px;width:175px;height:1px;background:#e8e8e8"></div><div class="a" style="left:402px;top:446px;width:16px;height:16px;background:#f3f3f3;border:1.3px solid #5a5a5a;border-radius:4px"></div><div class="t d" style="left:426px;top:446px">垫圈<span class="m">...</span></div><div class="t d" style="left:490px;top:446px"><span class="m">JSX-42...</span></div><svg class="a" style="left:576px;top:447px" width="16" height="14"><path d="M1.5 7.5 L5.5 11.5 L14.5 2.5" fill="none" stroke="#f01818" stroke-width="1.1"/></svg><div class="a" style="left:420px;top:485px;width:175px;height:1px;background:#e8e8e8"></div><div class="a" style="left:402px;top:467px;width:16px;height:16px;background:#f3f3f3;border:1.3px solid #5a5a5a;border-radius:4px"></div><div class="t d" style="left:426px;top:467px">垫圈<span class="m">...</span></div><div class="t d" style="left:490px;top:467px"><span class="m">JSX-42...</span></div><svg class="a" style="left:576px;top:468px" width="16" height="14"><path d="M1.5 7.5 L5.5 11.5 L14.5 2.5" fill="none" stroke="#f01818" stroke-width="1.1"/></svg><div class="a" style="left:420px;top:506px;width:175px;height:1px;background:#e8e8e8"></div><div class="a" style="left:402px;top:488px;width:16px;height:16px;background:#f3f3f3;border:1.3px solid #5a5a5a;border-radius:4px"></div><div class="t d" style="left:426px;top:488px">垫圈<span class="m">...</span></div><div class="t d" style="left:490px;top:488px"><span class="m">JSX-42...</span></div><svg class="a" style="left:576px;top:489px" width="16" height="14"><path d="M1.5 7.5 L5.5 11.5 L14.5 2.5" fill="none" stroke="#f01818" stroke-width="1.1"/></svg><div class="a" style="left:420px;top:527px;width:175px;height:1px;background:#e8e8e8"></div><div class="a" style="left:402px;top:509px;width:16px;height:16px;background:#f3f3f3;border:1.3px solid #5a5a5a;border-radius:4px"></div><div class="t d" style="left:426px;top:509px">螺钉<span class="m">...</span></div><div class="t d" style="left:490px;top:509px"><span class="m">JSX-42...</span></div><svg class="a" style="left:576px;top:510px" width="16" height="14"><path d="M1.5 7.5 L5.5 11.5 L14.5 2.5" fill="none" stroke="#f01818" stroke-width="1.1"/></svg><div class="a" style="left:420px;top:548px;width:175px;height:1px;background:#e8e8e8"></div><div class="a" style="left:402px;top:530px;width:16px;height:16px;background:#f3f3f3;border:1.3px solid #5a5a5a;border-radius:4px"></div><div class="t d" style="left:426px;top:530px">螺钉<span class="m">...</span></div><div class="t d" style="left:490px;top:530px"><span class="m">JSX-42...</span></div><svg class="a" style="left:576px;top:531px" width="16" height="14"><path d="M1.5 7.5 L5.5 11.5 L14.5 2.5" fill="none" stroke="#f01818" stroke-width="1.1"/></svg><div class="a" style="left:420px;top:569px;width:175px;height:1px;background:#e8e8e8"></div><div class="a" style="left:402px;top:551px;width:16px;height:16px;background:#f3f3f3;border:1.3px solid #5a5a5a;border-radius:4px"></div><div class="t d" style="left:426px;top:551px">螺钉<span class="m">...</span></div><div class="t d" style="left:490px;top:551px"><span class="m">JSX-42...</span></div><svg class="a" style="left:576px;top:552px" width="16" height="14"><path d="M1.5 7.5 L5.5 11.5 L14.5 2.5" fill="none" stroke="#f01818" stroke-width="1.1"/></svg><div class="a" style="left:420px;top:590px;width:175px;height:1px;background:#e8e8e8"></div><div class="a" style="left:402px;top:572px;width:16px;height:16px;background:#f3f3f3;border:1.3px solid #5a5a5a;border-radius:4px"></div><div class="t d" style="left:426px;top:572px">螺母<span class="m">M8</span></div><div class="t d" style="left:490px;top:572px"><span class="m">JSX-42...</span></div><svg class="a" style="left:576px;top:573px" width="16" height="14"><path d="M1.5 7.5 L5.5 11.5 L14.5 2.5" fill="none" stroke="#f01818" stroke-width="1.1"/></svg><div class="a" style="left:420px;top:611px;width:175px;height:1px;background:#e8e8e8"></div><div class="a" style="left:402px;top:593px;width:16px;height:16px;background:#f3f3f3;border:1.3px solid #5a5a5a;border-radius:4px"></div><div class="t d" style="left:426px;top:593px">螺栓<span class="m">M6</span></div><div class="t d" style="left:490px;top:593px"><span class="m">JSX-42...</span></div><svg class="a" style="left:576px;top:594px" width="16" height="14"><path d="M1.5 7.5 L5.5 11.5 L14.5 2.5" fill="none" stroke="#f01818" stroke-width="1.1"/></svg><div class="a" style="left:420px;top:632px;width:175px;height:1px;background:#e8e8e8"></div><div class="a" style="left:402px;top:614px;width:16px;height:16px;background:#f3f3f3;border:1.3px solid #5a5a5a;border-radius:4px"></div><div class="t d" style="left:426px;top:614px">螺栓<span class="m">M6</span></div><div class="t d" style="left:490px;top:614px"><span class="m">JSX-42...</span></div><svg class="a" style="left:576px;top:615px" width="16" height="14"><path d="M1.5 7.5 L5.5 11.5 L14.5 2.5" fill="none" stroke="#f01818" stroke-width="1.1"/></svg><div class="a" style="left:420px;top:653px;width:175px;height:1px;background:#e8e8e8"></div><div class="a" style="left:402px;top:635px;width:16px;height:16px;background:#f3f3f3;border:1.3px solid #5a5a5a;border-radius:4px"></div><div class="t d" style="left:426px;top:635px">螺栓<span class="m">M6</span></div><div class="t d" style="left:490px;top:635px"><span class="m">JSX-42...</span></div><svg class="a" style="left:576px;top:636px" width="16" height="14"><path d="M1.5 7.5 L5.5 11.5 L14.5 2.5" fill="none" stroke="#f01818" stroke-width="1.1"/></svg><div class="a" style="left:420px;top:674px;width:175px;height:1px;background:#e8e8e8"></div><div class="a" style="left:402px;top:656px;width:16px;height:16px;background:#f3f3f3;border:1.3px solid #5a5a5a;border-radius:4px"></div><div class="t d" style="left:426px;top:656px">螺栓<span class="m">M6</span></div><div class="t d" style="left:490px;top:656px"><span class="m">JSX-42...</span></div><svg class="a" style="left:576px;top:657px" width="16" height="14"><path d="M1.5 7.5 L5.5 11.5 L14.5 2.5" fill="none" stroke="#f01818" stroke-width="1.1"/></svg><div class="a" style="left:420px;top:695px;width:175px;height:1px;background:#e8e8e8"></div><div class="a" style="left:402px;top:677px;width:16px;height:16px;background:#f3f3f3;border:1.3px solid #5a5a5a;border-radius:4px"></div><div class="t d" style="left:426px;top:677px">平键<span class="m">...</span></div><div class="t d" style="left:490px;top:677px"><span class="m">JSX-42...</span></div><svg class="a" style="left:576px;top:678px" width="16" height="14"><path d="M1.5 7.5 L5.5 11.5 L14.5 2.5" fill="none" stroke="#f01818" stroke-width="1.1"/></svg><div class="a" style="left:420px;top:716px;width:175px;height:1px;background:#e8e8e8"></div><div class="a" style="left:402px;top:698px;width:16px;height:16px;background:#f3f3f3;border:1.3px solid #5a5a5a;border-radius:4px"></div><div class="t d" style="left:426px;top:698px">手柄</div><div class="t d" style="left:490px;top:698px"><span class="m">JSX-42...</span></div><svg class="a" style="left:576px;top:699px" width="16" height="14"><path d="M1.5 7.5 L5.5 11.5 L14.5 2.5" fill="none" stroke="#f01818" stroke-width="1.1"/></svg><div class="a" style="left:420px;top:737px;width:175px;height:1px;background:#e8e8e8"></div><div class="a" style="left:402px;top:719px;width:16px;height:16px;background:#f3f3f3;border:1.3px solid #5a5a5a;border-radius:4px"></div><div class="t d" style="left:426px;top:719px">箱盖</div><div class="t d" style="left:490px;top:719px"><span class="m">JSX-42...</span></div><svg class="a" style="left:576px;top:720px" width="16" height="14"><path d="M1.5 7.5 L5.5 11.5 L14.5 2.5" fill="none" stroke="#f01818" stroke-width="1.1"/></svg><div class="a" style="left:420px;top:758px;width:175px;height:1px;background:#e8e8e8"></div><div class="a" style="left:402px;top:740px;width:16px;height:16px;background:#f3f3f3;border:1.3px solid #5a5a5a;border-radius:4px"></div><div class="t d" style="left:426px;top:740px">箱体</div><div class="t d" style="left:490px;top:740px"><span class="m">JSX-42...</span></div><div class="a" style="left:420px;top:779px;width:175px;height:1px;background:#e8e8e8"></div><div class="a" style="left:402px;top:761px;width:16px;height:16px;background:#f3f3f3;border:1.3px solid #5a5a5a;border-radius:4px"></div><div class="t d" style="left:426px;top:761px">正齿轮</div><div class="t d" style="left:490px;top:761px"><span class="m">JSX-42...</span></div><svg class="a" style="left:576px;top:762px" width="16" height="14"><path d="M1.5 7.5 L5.5 11.5 L14.5 2.5" fill="none" stroke="#f01818" stroke-width="1.1"/></svg><div class="a" style="left:420px;top:800px;width:175px;height:1px;background:#e8e8e8"></div><div class="a" style="left:402px;top:782px;width:16px;height:16px;background:#f3f3f3;border:1.3px solid #5a5a5a;border-radius:4px"></div><div class="t d" style="left:426px;top:782px">轴承<span class="m">...</span></div><div class="t d" style="left:490px;top:782px"><span class="m">JSX-42...</span></div><svg class="a" style="left:576px;top:783px" width="16" height="14"><path d="M1.5 7.5 L5.5 11.5 L14.5 2.5" fill="none" stroke="#f01818" stroke-width="1.1"/></svg><div class="a" style="left:420px;top:821px;width:175px;height:1px;background:#e8e8e8"></div><div class="a" style="left:402px;top:803px;width:16px;height:16px;background:#f3f3f3;border:1.3px solid #5a5a5a;border-radius:4px"></div><div class="t d" style="left:426px;top:803px">轴承<span class="m">...</span></div><div class="t d" style="left:490px;top:803px"><span class="m">JSX-42...</span></div><svg class="a" style="left:576px;top:804px" width="16" height="14"><path d="M1.5 7.5 L5.5 11.5 L14.5 2.5" fill="none" stroke="#f01818" stroke-width="1.1"/></svg>
<!-- right grid -->
<div class="a" style="left:622px;top:332px;width:251px;height:492px;background:#fff;border:1px solid #a5a5aa"></div>
<div class="a" style="left:756px;top:334px;width:1px;height:25px;background:#e8e8e8"></div>
<div class="a" style="left:624px;top:359px;width:21px;height:378px;background:#dcdcdc"></div>
<div class="a" style="left:646px;top:359px;width:224px;height:378px;background:#efefef"></div>
<div class="t d" style="left:651px;top:339px">拆卸活动</div>
<div class="t d" style="left:763px;top:339px">活动对象</div>
<div class="t d" style="left:651px;top:362px">拆卸活动<span class="m">18</span></div><div class="t d" style="left:762px;top:362px">箱盖</div><div class="t d" style="left:651px;top:383px">拆卸活动<span class="m">17</span></div><div class="t d" style="left:762px;top:383px">注油孔盖</div><div class="t d" style="left:651px;top:404px">拆卸活动<span class="m">16</span></div><div class="t d" style="left:762px;top:404px">手柄</div><div class="t d" style="left:651px;top:425px">拆卸活动<span class="m">15</span></div><div class="t d" style="left:762px;top:425px">锥齿轮部件</div><div class="t d" style="left:651px;top:446px">拆卸活动<span class="m">14</span></div><div class="t d" style="left:762px;top:446px">正齿轮</div><div class="t d" style="left:651px;top:467px">拆卸活动<span class="m">13</span></div><div class="t d" style="left:762px;top:467px">垫片<span class="m">8</span></div><div class="t d" style="left:651px;top:488px">拆卸活动<span class="m">12</span></div><div class="t d" style="left:762px;top:488px">螺母<span class="m">M8</span></div><div class="t d" style="left:651px;top:509px">拆卸活动<span class="m">11</span></div><div class="t d" style="left:762px;top:509px">平键<span class="m">12</span><svg width="15" height="13" style="vertical-align:-1px"><path d="M2.5 2 L12.5 12 M12.5 2 L2.5 12" stroke="#000" stroke-width="1"/></svg><span class="m">4</span></div><div class="t d" style="left:651px;top:530px">拆卸活动<span class="m">10</span></div><div class="t d" style="left:762px;top:530px">垫圈<span class="m">35</span></div><div class="t d" style="left:651px;top:551px">拆卸活动<span class="m">9</span></div><div class="t d" style="left:762px;top:551px">垫圈<span class="m">35</span></div><div class="t d" style="left:651px;top:572px">拆卸活动<span class="m">8</span></div><div class="t d" style="left:762px;top:572px">垫圈<span class="m">35</span></div><div class="t d" style="left:651px;top:593px">拆卸活动<span class="m">7</span></div><div class="t d" style="left:762px;top:593px">轴承盖<span class="m">35</span></div><div class="t d" style="left:651px;top:614px">拆卸活动<span class="m">6</span></div><div class="t d" style="left:762px;top:614px">垫圈<span class="m">35_1</span></div><div class="t d" style="left:651px;top:635px">拆卸活动<span class="m">5</span></div><div class="t d" style="left:762px;top:635px">垫圈<span class="m">35_1</span></div><div class="t d" style="left:651px;top:656px">拆卸活动<span class="m">4</span></div><div class="t d" style="left:762px;top:656px">垫圈<span class="m">35_1</span></div><div class="t d" style="left:651px;top:677px">拆卸活动<span class="m">3</span></div><div class="t d" style="left:762px;top:677px">轴承盖<span class="m">35_1</span></div><div class="t d" style="left:651px;top:698px">拆卸活动<span class="m">2</span></div><div class="t d" style="left:762px;top:698px">螺钉<span class="m">M4</span><svg width="15" height="13" style="vertical-align:-1px"><path d="M2.5 2 L12.5 12 M12.5 2 L2.5 12" stroke="#000" stroke-width="1"/></svg><span class="m">18*3</span></div><div class="t d" style="left:651px;top:719px">拆卸活动<span class="m">1</span></div><div class="t d" style="left:762px;top:719px">螺栓<span class="m">M6*4</span></div>
<div class="a" style="left:449px;top:830px;width:85px;height:26px;background:#fbfbfb;border:1px solid #d0d0d0;border-radius:4px"></div>
<div class="a" style="left:683px;top:830px;width:85px;height:26px;background:#fbfbfb;border:1px solid #d0d0d0;border-radius:4px"></div>
<div class="a" style="left:781px;top:830px;width:85px;height:26px;background:#fbfbfb;border:1px solid #d0d0d0;border-radius:4px"></div>
<div class="a" style="left:361px;top:853px;width:518px;height:20px;background:#fff"></div>
<div class="a" style="left:361px;top:843px;width:518px;height:12px;border:1.5px solid #1a7fe0;border-top:none;border-radius:0 0 9px 9px"></div>
<div class="t d" style="left:462px;top:834px">智能分析</div>
<div class="t d" style="left:711px;top:834px">确定</div>
<div class="t d" style="left:809px;top:834px">取消</div>
<!-- RIBBON CONTENT -->
<svg class="a" style="left:0;top:0" width="760" height="170" viewBox="0 0 760 170">
<defs>
<linearGradient id="gb" x1="0" y1="0" x2="0" y2="1"><stop offset="0" stop-color="#b9effd"/><stop offset="0.45" stop-color="#7fd4f7"/><stop offset="0.5" stop-color="#1f8ee3"/><stop offset="1" stop-color="#55c3f5"/></linearGradient>
<linearGradient id="gbf" x1="0" y1="0" x2="0" y2="1"><stop offset="0" stop-color="#d9f3fd"/><stop offset="0.45" stop-color="#b8e4f8"/><stop offset="0.5" stop-color="#8cc6ef"/><stop offset="1" stop-color="#b3e1f8"/></linearGradient>
<linearGradient id="gtri" x1="0" y1="0" x2="1" y2="1"><stop offset="0" stop-color="#e97a6e"/><stop offset="1" stop-color="#f2a46a"/></linearGradient>
<linearGradient id="gyel" x1="0" y1="0" x2="0" y2="1"><stop offset="0" stop-color="#fff9a0"/><stop offset="1" stop-color="#e8d800"/></linearGradient>
<linearGradient id="ggrn" x1="0" y1="0" x2="0" y2="1"><stop offset="0" stop-color="#b4f7b0"/><stop offset="1" stop-color="#3ee83c"/></linearGradient>
<radialGradient id="gspk" cx="0.45" cy="0.3" r="0.8"><stop offset="0" stop-color="#d8eefc"/><stop offset="0.5" stop-color="#8ec3ea"/><stop offset="1" stop-color="#3d7fc5"/></radialGradient>
</defs>
<!-- title bar quick access -->
<g>
 <path d="M4 10 L13 5 L21 9 L20 17 L8 20 Z" fill="#8fd0f0" stroke="#222" stroke-width="1"/>
 <circle cx="7.5" cy="7" r="3" fill="#e03030"/>
 <path d="M14 4 L19 6 L18 11 L13 11 Z" fill="#f7c23a"/>
 <path d="M8 12 L12 14 L10 18 L7 16Z" fill="#20b030"/>
 <rect x="28" y="5" width="1" height="17" fill="#666"/>
 <rect x="33" y="3" width="20" height="20" fill="#efefef"/>
 <path d="M36.5 4.5 H45 L49 8.5 V21.5 H36.5 Z" fill="#f4f6fb" stroke="#4d6690" stroke-width="1"/>
 <rect x="59" y="3" width="20" height="20" fill="#efefef"/>
 <path d="M60 9 H65 L66 10 H73 V21 H60 Z" fill="#e7cf72" stroke="#8a7230" stroke-width="0.8"/>
 <path d="M62 13 H79 L74 21 H60 Z" fill="#f5c842" stroke="#8a6a20" stroke-width="0.8"/>
 <path d="M71 6 Q74 3 78 7" fill="none" stroke="#3a6ab0" stroke-width="1.3"/>
 <rect x="85" y="3" width="20" height="20" fill="#efefef"/>
 <rect x="86" y="5" width="17" height="17" rx="1" fill="#5a63d8"/>
 <rect x="89" y="5" width="11" height="7" fill="#e8ecff"/>
 <rect x="90" y="16" width="8" height="5" fill="#2a2f6a"/>
 <rect x="111" y="3" width="20" height="20" fill="#efefef"/>
 <path d="M115 9 L121 5 V8 Q128 8 127 15 Q126 21 120 21 L121 18 Q124 17 124 14 Q124 11 121 11 V14 Z" fill="#3f7fd6"/>
 <rect x="137" y="3" width="20" height="20" fill="#f3f3f3"/>
 <path d="M153 9 L147 5 V8 Q140 8 141 15 Q142 21 148 21 L147 18 Q144 17 144 14 Q144 11 147 11 V14 Z" fill="#a9c8ee"/>
 <rect x="166" y="9" width="5" height="1.5" fill="#000"/>
 <path d="M165.5 12 H171.5 L168.5 16 Z" fill="#000"/>
 <rect x="179" y="5" width="1" height="17" fill="#666"/>
</g>
<!-- app button icon -->
<g>
 <path d="M19 38 L27 35 L34 39 L33 48 L21 51 Z" fill="#8fd0f0" stroke="#222" stroke-width="1"/>
 <circle cx="22" cy="38" r="2.8" fill="#e03030"/>
 <path d="M28 36 L33 38 L32 42 L27 42 Z" fill="#f7c23a"/>
 <path d="M22 44 L26 46 L24 50 L21 48Z" fill="#20b030"/>
 <path d="M41 42 L46.5 48 L52 42" fill="none" stroke="#000" stroke-width="2"/>
</g>
<!-- playback button group -->
<rect x="8.5" y="71.5" width="252" height="26" rx="2" fill="#f2f5fa" stroke="#b2c2d6" stroke-width="1"/>
<g fill="#c8d3e0">
 <rect x="35" y="74" width="1" height="21"/><rect x="63" y="74" width="1" height="21"/><rect x="91" y="74" width="1" height="21"/><rect x="119" y="74" width="1" height="21"/><rect x="147" y="74" width="1" height="21"/><rect x="175" y="74" width="1" height="21"/><rect x="203" y="74" width="1" height="21"/><rect x="231" y="74" width="1" height="21"/>
</g>
<g stroke="#1b5db8" stroke-width="1.6">
 <circle cx="21" cy="83.7" r="9.3" fill="url(#gb)"/>
 <circle cx="49" cy="83.7" r="9.3" fill="url(#gb)"/>
 <circle cx="77" cy="83.7" r="9.3" fill="url(#gb)"/>
 <circle cx="161" cy="83.7" r="9.3" fill="url(#gb)"/>
 <circle cx="189" cy="83.7" r="9.3" fill="url(#gb)"/>
 <circle cx="217" cy="83.7" r="9.3" fill="url(#gb)"/>
</g>
<g stroke="#8db8e6" stroke-width="1.6">
 <circle cx="105" cy="83.7" r="9.3" fill="url(#gbf)"/>
 <circle cx="133" cy="83.7" r="9.3" fill="url(#gbf)"/>
</g>
<g fill="#000">
 <path d="M16 84 L20.5 79 V89 Z M20.5 84 L25 79 V89 Z"/>
 <rect x="45" y="79" width="2" height="10"/><path d="M47 84 L53 79 V89 Z"/>
 <path d="M73.5 84 L79.5 79 V89 Z"/>
 <path d="M158.5 79 L164.5 84 L158.5 89 Z"/>
 <path d="M185 79 L191 84 L185 89 Z"/><rect x="191" y="79" width="2" height="10"/>
 <path d="M211.5 79 L216.5 84 L211.5 89 Z M216.5 79 L221.5 84 L216.5 89 Z"/>
</g>
<g fill="#7a7f88"><rect x="101.5" y="79" width="2" height="10"/><rect x="106.5" y="79" width="2" height="10"/><rect x="129.5" y="80" width="7" height="7"/></g>
<path d="M237 77 H250 Q255 77 255 82.5 Q255 88 250 88 H242 V92.5 L235 86 L242 79.5 V84 H249 Q251 84 251 82.5 Q251 81 249 81 H237 Z" fill="#6cc56c"/>
<!-- slider -->
<rect x="44" y="119" width="212" height="2" fill="#d8d4cc"/>
<g fill="#8a9aae"><rect x="44" y="120" width="1.5" height="4"/><rect x="128" y="120" width="1.5" height="4"/><rect x="170" y="120" width="1.5" height="4"/><rect x="212" y="120" width="1.5" height="4"/><rect x="254" y="120" width="1.5" height="4"/></g>
<path d="M80.5 112 H89 V124 L86.5 128 H83 L80.5 124 Z" fill="#0a6fd8"/>
<!-- separators -->
<rect x="407" y="64" width="1" height="98" fill="#b8c6d8"/>
<rect x="579" y="64" width="1" height="98" fill="#b8c6d8"/>
<rect x="754" y="64" width="1" height="98" fill="#b8c6d8"/>
<!-- fullscreen icon -->
<path d="M444 70 H421 V103 H454 V83" fill="none" stroke="#8cc8f2" stroke-width="1.8"/>
<path d="M430 76 L447 87 L430 98 Z" fill="url(#gtri)"/>
<path d="M445 79 L455 69" stroke="#7ab8ec" stroke-width="2.2"/>
<path d="M449 64.5 L459 64 L458 74 Z" fill="#7ab8ec"/>
<!-- interference icon -->
<rect x="492" y="72.5" width="17" height="26" rx="1.5" fill="url(#ggrn)" stroke="#4fb84a" stroke-width="1"/>
<rect x="470.5" y="64.5" width="22" height="24" fill="url(#gyel)" stroke="#b8a830" stroke-width="1"/>
<path d="M479 84 L481 89 L486 86 L484 91 L490 93 L484 95 L487 101 L481 98 L479 104 L476.5 98 L471 101 L473.5 95 L469 93 L474 91 L471.5 86 L476.5 89 Z" fill="#f65c1c" stroke="#c23a08" stroke-width="0.6"/>
<!-- speaker -->
<circle cx="545" cy="83.8" r="19.5" fill="url(#gspk)" stroke="#5e94cf" stroke-width="1"/>
<path d="M531 77 H536 L544 70 V97 L536 90 H531 Z" fill="#eef2f6"/>
<path d="M550 77 L556 74 M550 83.5 H558 M550 90 L556 93" stroke="#e8eef5" stroke-width="1.6"/>
<!-- interference analysis -->
<rect x="607.5" y="68.5" width="20" height="19.5" fill="none" stroke="#f27474" stroke-width="2"/>
<rect x="620" y="79.5" width="20.5" height="19.5" fill="none" stroke="#80c6fa" stroke-width="2"/>
<!-- excel doc -->
<path d="M696.5 65.5 H719 L725.5 72 V102.5 H696.5 Z" fill="#eef3fb" stroke="#a8bedc" stroke-width="1"/>
<path d="M719 65.5 V72 H725.5" fill="#cfdcee" stroke="#a8bedc" stroke-width="1"/>
<g stroke="#c4d4ea" stroke-width="1"><path d="M700 90 H721 M700 94 H721 M700 98 H721 M706 88 V99 M712 88 V99 M717 88 V99"/></g>
<rect x="690.5" y="67.5" width="19.5" height="19.5" fill="#e3eedf" stroke="#7fac7a" stroke-width="1.2"/>
<path d="M694 72 L706 83 M706 72 L694 83" stroke="#72b072" stroke-width="2.4"/>
</svg>
<div class="t" style="left:274px;top:77px;color:#6b7586">用时</div>
<div class="a" style="left:304px;top:71px;width:63px;height:27px;background:#efefef;border:1px solid #b4bfcc"></div>
<div class="t" style="left:308px;top:77px;font-size:14.5px;color:#6b7586">12.60s</div>
<div class="t" style="left:369px;top:77px;color:#6b7586">秒</div>
<div class="t" style="left:11px;top:113px;color:#6b7586;font-size:14px">速度</div>
<div class="t" style="left:41px;top:133px;color:#6b7586;font-size:13px">0.1</div>
<div class="t" style="left:84px;top:133px;color:#6b7586;font-size:13px">1</div>
<div class="t" style="left:125px;top:133px;color:#6b7586;font-size:13px">2</div>
<div class="t" style="left:167px;top:133px;color:#6b7586;font-size:13px">3</div>
<div class="t" style="left:209px;top:133px;color:#6b7586;font-size:13px">4</div>
<div class="t" style="left:251px;top:133px;color:#6b7586;font-size:13px">5</div>
<div class="t" style="left:192px;top:147px;color:#6b7586;font-size:14px">播放</div>
<div class="t" style="left:263px;top:113px;color:#6b7586;font-size:14px">当前速度:</div>
<div class="a" style="left:323px;top:107px;width:38px;height:27px;background:#efefef;border:1px solid #b4bfcc"></div>
<div class="t" style="left:327px;top:113px;font-size:14px;color:#6b7586">1.0x</div>
<div class="a" style="left:364px;top:108px;width:40px;height:24px;background:linear-gradient(#fbfcfe,#e9eef5);border:1px solid #bfcbd9;border-radius:2px"></div>
<div class="t" style="left:367px;top:113px;font-size:14px;color:#000">重置</div>
<div class="t" style="left:426px;top:110px;color:#555d6a;font-size:14px">全屏</div>
<div class="t" style="left:476px;top:110px;color:#000;font-size:14px">干涉</div>
<div class="t" style="left:517px;top:110px;color:#555d6a;font-size:14px">音量开关</div>
<div class="t" style="left:589px;top:110px;color:#555d6a;font-size:14px">干涉量分析</div>
<div class="t" style="left:664px;top:110px;color:#555d6a;font-size:14px">输出干涉报告</div>
<div class="t" style="left:481px;top:147px;color:#6b7586;font-size:14px">控制</div>
<div class="t" style="left:655px;top:147px;color:#6b7586;font-size:14px">输出</div>
<!-- window controls -->
<div class="a" style="left:1765px;top:13px;width:13px;height:1px;background:#777"></div>
<div class="a" style="left:1823px;top:10px;width:10px;height:10px;border:1px solid #777;border-radius:1px"></div>
<div class="a" style="left:1825px;top:8px;width:10px;height:10px;border-top:1px solid #777;border-right:1px solid #777;border-radius:1px"></div>
<svg class="a" style="left:1880px;top:6px" width="16" height="16"><path d="M2 2 L14 14 M14 2 L2 14" stroke="#777" stroke-width="1.2"/></svg>
<!-- search -->
<div class="a" style="left:1668px;top:29px;width:213px;height:26px;background:#f3f7fc;border:1px solid #b9c8dc"></div>
<div class="t" style="left:1671px;top:34px;font-size:14px;color:#000">请输入您想搜索的内容</div>
<svg class="a" style="left:1818px;top:31px" width="18" height="18"><rect x="0" y="1" width="16" height="16" fill="#fff"/><circle cx="9.5" cy="6.5" r="3.5" fill="none" stroke="#1c4f9e" stroke-width="2"/><path d="M7 9 L3 13" stroke="#1c4f9e" stroke-width="2.4"/></svg>
<svg class="a" style="left:1882px;top:32px" width="38" height="22"><circle cx="12" cy="10" r="8.3" fill="#2a5ccc" stroke="#a9c2e6" stroke-width="1.6"/><text x="12" y="15" font-size="13" font-weight="bold" fill="#fff" text-anchor="middle" font-family="Liberation Sans">?</text><path d="M27 7.5 H34 L30.5 11 Z" fill="#000"/></svg>
</body></html>
